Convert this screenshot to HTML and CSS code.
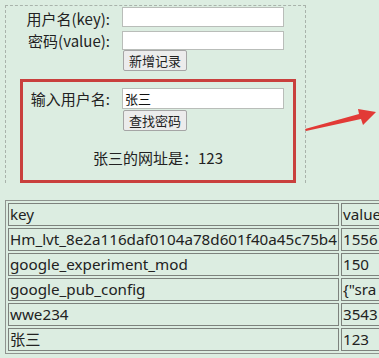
FILE: index.html
```html
<!DOCTYPE html>
<html lang="zh">
<head>
    <meta charset="UTF-8">
    <title>本地存储</title>
    <link rel="stylesheet" href="styles.css">
</head>
<body>
    <div class="panel">
        <div class="add-form">
            <label class="label">用户名(key):</label>
            <input class="field" type="text">
            <label class="label">密码(value):</label>
            <input class="field field-short" type="text">
            <span></span>
            <button class="btn">新增记录</button>
        </div>

        <div class="search">
            <div class="search-form">
                <label class="label">输入用户名:</label>
                <input class="field" type="text" value="张三">
                <span></span>
                <button class="btn">查找密码</button>
            </div>
            <p class="result">张三的网址是：123</p>
        </div>
    </div>

    <!-- flecha roja que señala hacia la derecha -->
    <svg class="arrow" width="80" height="30" viewBox="0 0 80 30">
        <polygon points="2,25 56,10 55,5 73,8 60,21 58,15 3,27" fill="#e23a36"/>
    </svg>

    <table class="store">
        <tr><td class="k">key</td><td>value</td></tr>
        <tr><td class="k">Hm_lvt_8e2a116daf0104a78d601f40a45c75b4</td><td>1556</td></tr>
        <tr><td class="k">google_experiment_mod</td><td>150</td></tr>
        <tr><td class="k">google_pub_config</td><td>{"sra</td></tr>
        <tr><td class="k">wwe234</td><td>3543</td></tr>
        <tr><td class="k">张三</td><td>123</td></tr>
    </table>
</body>
</html>
```

FILE: styles.css
```css
html, body {
    margin: 0;
    overflow: hidden;
}

body {
    background-color: #dcede1;
    font-family: "Noto Sans", "Noto Sans CJK SC", sans-serif;
    color: #222;
    padding: 5px 0 0 5px;
    width: 500px;
    position: relative;
}

.panel {
    width: 299px;
    border: 1px dashed #a9b3ab;
    border-bottom: none;
}

.add-form,
.search-form {
    display: grid;
    grid-template-columns: 104px 162px;
    column-gap: 12px;
    align-items: center;
}

.add-form {
    padding-top: 1px;
}

.search-form {
    grid-template-columns: 87px 162px;
}

.label {
    font-family: "Noto Sans CJK SC", sans-serif;
    font-size: 15px;
    text-align: right;
    white-space: nowrap;
    line-height: 18px;
}

.field {
    box-sizing: border-box;
    height: 20px;
    width: 162px;
    margin: 0 0 4px 0;
    border: 1px solid #b9bdb9;
    background: #fff;
    padding: 0 2px;
    font-family: "Noto Sans CJK SC", sans-serif;
    font-size: 13px;
    color: #111;
}

.field-short {
    height: 19px;
    margin-bottom: 0;
}

.btn {
    justify-self: start;
    margin-left: 1px;
    height: 21px;
    padding: 0 5px;
    border: 1px solid #a5a5a5;
    border-radius: 2px;
    background: #ececec;
    font-family: "Noto Sans CJK SC", sans-serif;
    font-size: 13px;
    line-height: 19px;
    color: #222;
}

.search {
    margin: 8px 0 0 14px;
    width: 270px;
    border: 3px solid #c9403d;
    padding: 6px 0 12px 0;
}

.search .field {
    height: 21px;
    margin-bottom: 1px;
}

.result {
    margin: 17px 0 0 0;
    text-align: center;
    font-family: "Noto Sans CJK SC", sans-serif;
    font-size: 15px;
    line-height: 20px;
}

.arrow {
    position: absolute;
    left: 303px;
    top: 104px;
}

.store {
    margin-top: 17px;
    border: 1px solid #8f948f;
    border-spacing: 2px;
    font-size: 15.2px;
    white-space: nowrap;
}

.store td {
    border: 1px solid #7d827d;
    padding: 1px;
    line-height: 19px;
}

.store .k {
    width: 327px;
}
```
